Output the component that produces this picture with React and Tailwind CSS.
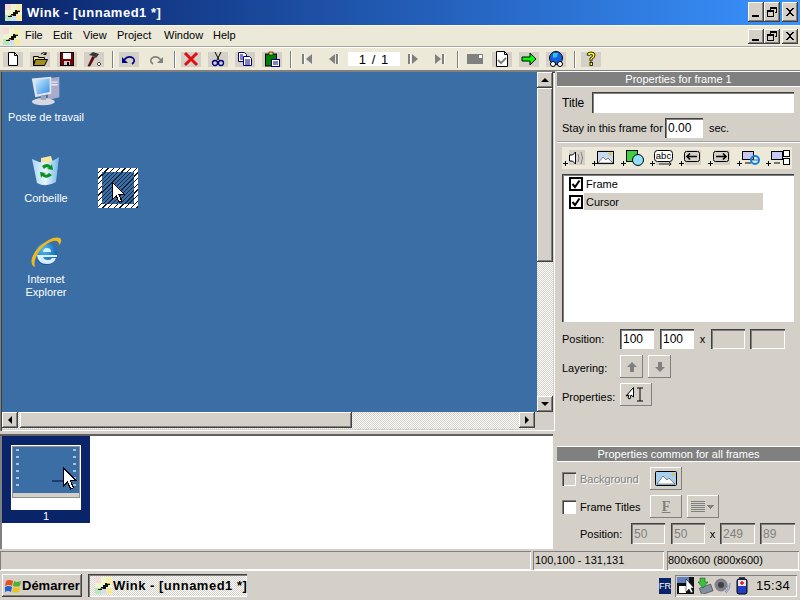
import { useId } from "react";

const raised = "bg-[#d4d0c8] shadow-[inset_-1px_-1px_0_#404040,inset_1px_1px_0_#ffffff,inset_-2px_-2px_0_#808080]";
const flatBtn = "bg-[#d4d0c8] shadow-[inset_-1px_-1px_0_#808080,inset_1px_1px_0_#ffffff]";
const sunken = "shadow-[inset_1px_1px_0_#808080,inset_-1px_-1px_0_#ffffff]";
const field = "bg-white shadow-[inset_1px_1px_0_#404040,inset_2px_2px_0_#808080,inset_-1px_-1px_0_#ffffff] flex items-center pl-[3px] text-[12px] leading-none";
const fieldOff = "bg-[#d4d0c8] text-[#808080] shadow-[inset_1px_1px_0_#404040,inset_2px_2px_0_#808080,inset_-1px_-1px_0_#ffffff] flex items-center pl-[3px] text-[12px] leading-none";
const dither = "bg-[repeating-conic-gradient(#ffffff_0_25%,#d4d0c8_0_50%)] bg-[length:2px_2px]";

function WinkLogo() {
  return (
    <svg width="17" height="17" viewBox="0 0 17 17" className="shrink-0" shapeRendering="crispEdges">
      <rect width="17" height="17" fill="#eef6d0" />
      <rect x="0" y="0" width="6" height="6" fill="#f8d8d8" />
      <rect x="11" y="0" width="6" height="6" fill="#f4f0b0" />
      <rect x="0" y="11" width="6" height="6" fill="#b8e8b8" />
      <rect x="6" y="11" width="5" height="6" fill="#c8e0f8" />
      <rect x="11" y="11" width="6" height="6" fill="#f8e8a0" />
      <path d="M3 12h3v-2h2v-2h2v-2h5v2h-2v2h-2v2h-4v1h-4z" fill="#101010" />
      <path d="M12 6h3v1h-3z" fill="#e8a020" />
      <path d="M5 11h3v1h-3z" fill="#c86020" />
    </svg>
  );
}

function WinBtn({ kind, className = "" }) {
  return (
    <div className={`${raised} w-[16px] flex items-center justify-center ${className}`}>
      <svg width="12" height="12" viewBox="0 0 12 12" shapeRendering="crispEdges">
        {kind === "min" && <rect x="2" y="9" width="7" height="2" fill="#000" />}
        {kind === "max" && (
          <>
            <path d="M4 1h7v6h-2v-1h1v-3h-5v1h-1z" fill="#000" />
            <path d="M1 4h7v7h-7z M2 6v4h5v-4z" fill="#000" fillRule="evenodd" />
          </>
        )}
        {kind === "close" && (
          <path d="M2 2h2v1h1v1h2v-1h1v-1h2v1h-1v1h-1v1h-1v2h1v1h1v1h1v1h-2v-1h-1v-1h-2v1h-1v1h-2v-1h1v-1h1v-1h1v-2h-1v-1h-1v-1h-1z" fill="#000" />
        )}
      </svg>
    </div>
  );
}

function ToolIcon({ children, bg = true, gap = true }) {
  return (
    <div className={`w-[20px] h-[15px] flex items-center justify-center shrink-0 ${bg ? "bg-[#d4d0c8]" : ""} ${gap ? "mr-[7px]" : ""}`}>
      <svg width="16" height="16" viewBox="0 0 16 16">{children}</svg>
    </div>
  );
}

function Sep({ left = true }) {
  return <div className={`w-[2px] h-[17px] bg-[#808080] border-r border-white mr-[5px] shrink-0 ${left ? "ml-[1px]" : "ml-0 mr-[6px]"}`} />;
}

function Toolbar() {
  return (
    <div className="h-[22px] bg-[#ece9d8] flex items-center pl-[3px] shrink-0">
      <ToolIcon><path d="M3.5 1.5h6l3 3v10h-9z" fill="#fff" stroke="#000" /><path d="M9.5 1.5v3h3" fill="none" stroke="#000" /></ToolIcon>
      <ToolIcon>
        <path d="M1.5 5.5h5v1h6v2h-9l-2 6z" fill="#f0e070" stroke="#000" />
        <path d="M3.5 8.5h12l-3 6h-11z" fill="#a09020" stroke="#000" />
        <path d="M9 3 Q12 0 14 3 M14 1v2.5h-2.5" fill="none" stroke="#000" />
      </ToolIcon>
      <ToolIcon>
        <rect x="1.5" y="1.5" width="13" height="13" fill="#800000" stroke="#000" />
        <rect x="4" y="2" width="8" height="6" fill="#fff" />
        <rect x="5" y="10" width="6" height="4" fill="#c8c8c8" />
        <rect x="8" y="11" width="2" height="3" fill="#000" />
      </ToolIcon>
      <ToolIcon>
        <path d="M2 15 L6.5 5.5 L8.5 6.5 L4 15 Z" fill="#800000" stroke="#200000" strokeWidth="0.6" />
        <path d="M3 4 L7 1 L13 3 L10 7 L7 5 Z" fill="#383838" />
        <path d="M13 11l2 2-2 2-2-2z" fill="#fff" stroke="#000" strokeWidth="0.7" />
      </ToolIcon>
      <Sep />
      <ToolIcon>
        <path d="M3 9 Q7 4 12 7 Q15 10 11 13" fill="none" stroke="#000080" strokeWidth="1.6" />
        <path d="M1 6v6h6z" fill="#000080" />
      </ToolIcon>
      <ToolIcon bg={false}>
        <path d="M13 9 Q9 4 4 7 Q1 10 5 13" fill="none" stroke="#808080" strokeWidth="1.6" />
        <path d="M15 6v6h-6z" fill="#808080" />
      </ToolIcon>
      <Sep />
      <ToolIcon>
        <path d="M2 2 L14 14 M14 2 L2 14" stroke="#e01010" strokeWidth="3" />
      </ToolIcon>
      <ToolIcon>
        <path d="M5 1 L9 9 M11 1 L7 9" stroke="#000" strokeWidth="1" />
        <circle cx="5" cy="12" r="2.5" fill="none" stroke="#000080" strokeWidth="1.3" />
        <circle cx="11" cy="12" r="2.5" fill="none" stroke="#000080" strokeWidth="1.3" />
      </ToolIcon>
      <ToolIcon>
        <path d="M1.5 1.5h6l2 2v7h-8z" fill="#fff" stroke="#000080" />
        <path d="M6.5 5.5h6l2 2v7h-8z" fill="#fff" stroke="#000080" />
        <path d="M8 9h5M8 11h5M8 13h5M3 4h3M3 6h3M3 8h3" stroke="#000080" />
      </ToolIcon>
      <ToolIcon>
        <rect x="1.5" y="3" width="11" height="12" fill="#008000" stroke="#000" />
        <rect x="5" y="1" width="4" height="3" fill="#e8d040" stroke="#000" strokeWidth="0.6" />
        <rect x="7.5" y="8.5" width="8" height="7" fill="#fff" stroke="#000080" />
        <path d="M9 11h5M9 13h5" stroke="#000080" />
      </ToolIcon>
      <Sep />
      <ToolIcon bg={false}>
        <rect x="3" y="3" width="2" height="10" fill="#808080" /><rect x="5" y="3" width="1" height="10" fill="#fff" />
        <path d="M13 3v10l-6-5z" fill="#808080" />
      </ToolIcon>
      <ToolIcon bg={false}>
        <path d="M9 3v10l-6-5z" fill="#808080" />
        <rect x="10" y="3" width="2" height="10" fill="#808080" /><rect x="12" y="3" width="1" height="10" fill="#fff" />
      </ToolIcon>
      <div className="w-[52px] h-[14px] bg-white flex items-center justify-center text-[13px] tracking-[1px] mr-[3px] -ml-[3px] shrink-0">1 / 1</div>
      <ToolIcon bg={false}>
        <rect x="3" y="3" width="2" height="10" fill="#808080" /><rect x="5" y="3" width="1" height="10" fill="#fff" />
        <path d="M7 3v10l6-5z" fill="#808080" />
      </ToolIcon>
      <ToolIcon bg={false}>
        <path d="M3 3v10l6-5z" fill="#808080" />
        <rect x="10" y="3" width="2" height="10" fill="#808080" /><rect x="12" y="3" width="1" height="10" fill="#fff" />
      </ToolIcon>
      <Sep left={false} />
      <ToolIcon bg={false}>
        <rect x="0" y="3" width="16" height="10" fill="#808080" />
        <rect x="12" y="4" width="3" height="3" fill="#fff" />
      </ToolIcon>
      <ToolIcon>
        <path d="M2.5 0.5h8l3 3v12h-11z" fill="#fff" stroke="#000" />
        <path d="M10.5 0.5v3h3" fill="none" stroke="#000" />
        <path d="M4 9l3 3 5-5" fill="none" stroke="#808080" strokeWidth="2" />
      </ToolIcon>
      <ToolIcon>
        <path d="M1 6h8v-4l6 6-6 6v-4h-8z" fill="#00ff00" stroke="#000" />
      </ToolIcon>
      <ToolIcon>
        <circle cx="8" cy="7" r="6.5" fill="#1060e0" stroke="#000" />
        <path d="M5 2 L10 2 L9 6 L5 7 Z" fill="#30c0e0" />
        <circle cx="5" cy="13" r="2.5" fill="#fff" stroke="#000" />
        <circle cx="12" cy="13" r="2.5" fill="#fff" stroke="#000" />
      </ToolIcon>
      <Sep />
      <ToolIcon gap={false}>
        <path d="M4 4 Q4 1 8 1 Q12 1 12 4 Q12 7 9 8 V10 H7 V7 Q10 6 9.5 4 Q8 2.5 6.5 4.5 Z" fill="#ffff00" stroke="#000" strokeWidth="0.8" />
        <rect x="7" y="11.5" width="2.5" height="3" fill="#ffff00" stroke="#000" strokeWidth="0.8" />
      </ToolIcon>
    </div>
  );
}

function ScrollBtn({ dir, className = "" }) {
  const pts = { up: "1,7 9,7 5,3", down: "1,3 9,3 5,7", left: "7,1 7,9 3,5", right: "3,1 3,9 7,5" };
  return (
    <div className={`${raised} h-[16px] flex items-center justify-center shrink-0 ${className}`}>
      <svg width="10" height="10" viewBox="0 0 10 10"><polygon points={pts[dir]} fill="#000" /></svg>
    </div>
  );
}

function Cursor({ className, w = 14, h = 22 }) {
  return (
    <svg width={w} height={h} viewBox="0 0 12 19" className={className} shapeRendering="crispEdges">
      <path d="M0.5 0.5 V16 L4 12.5 L6.5 18.5 L9 17.5 L6.5 11.5 H11.5 Z" fill="#fff" stroke="#000" />
    </svg>
  );
}

function DesktopIcons() {
  const id = useId();
  return (
    <>
      <div className="absolute left-[28px] top-[3px] w-[32px] h-[32px]">
        <svg width="32" height="32" viewBox="0 0 36 34">
          <defs>
            <linearGradient id={`${id}s`} x1="0" y1="0" x2="1" y2="1"><stop offset="0" stopColor="#d8f0ff" /><stop offset="1" stopColor="#2f8fe8" /></linearGradient>
          </defs>
          <path d="M20 3 L33 1 L33 24 L20 27 Z" fill="#a8acc8" />
          <path d="M24 7h7M24 10h7" stroke="#e8e8f0" strokeWidth="1.5" />
          <ellipse cx="15" cy="29" rx="13" ry="4" fill="#d8d8e0" />
          <path d="M2 3 L24 1 L24 20 L6 24 Z" fill="#e0e4ee" />
          <path d="M5 5 L22 3 L22 18 L8 21 Z" fill={`url(#${id}s)`} />
          <rect x="12" y="22" width="6" height="5" fill="#a0a4b8" />
        </svg>
      </div>
      <div className="absolute left-0 top-[39px] w-[88px] text-center text-white text-[11px] leading-[13px]">Poste de travail</div>

      <div className="absolute left-[29px] top-[83px] w-[30px] h-[32px]">
        <svg width="30" height="32" viewBox="0 0 30 32">
          <defs>
            <linearGradient id={`${id}b`} x1="0" y1="0" x2="1" y2="0"><stop offset="0" stopColor="#a8d8f8" /><stop offset="0.5" stopColor="#e8f4fc" /><stop offset="1" stopColor="#70b8e8" /></linearGradient>
          </defs>
          <path d="M10 3 L20 1 L22 8 L10 9 Z" fill="#f4e8a0" />
          <path d="M1 4 Q15 12 28 2 L25 27 Q15 33 6 28 Z" fill={`url(#${id}b)`} />
          <path d="M11 11 Q16 7 20 11 L21 9 L22 15 L16 14 L18 13 Q15 11 13 14 Z" fill="#089020" />
          <path d="M21 20 Q16 25 11 21 L10 23 L9 17 L15 18 L13 19 Q16 21 18 18 Z" fill="#089020" />
        </svg>
      </div>
      <div className="absolute left-0 top-[120px] w-[88px] text-center text-white text-[11px] leading-[13px]">Corbeille</div>

      <div className="absolute left-[28px] top-[165px] w-[32px] h-[32px]">
        <svg width="32" height="32" viewBox="0 0 32 32">
          <defs>
            <radialGradient id={`${id}e`} cx="0.4" cy="0.3" r="0.8"><stop offset="0" stopColor="#50c0f0" /><stop offset="1" stopColor="#0848a0" /></radialGradient>
          </defs>
          <circle cx="16" cy="17" r="11" fill={`url(#${id}e)`} />
          <path d="M13 15 Q13.5 11 17 11 Q21 11 21 15 Z" fill="#d8eefa" />
          <path d="M7 18h20v2h-14q1 3 5 3 3 0 4-2h4q-2 6-9 6-9 0-10-9z" fill="#d8eefa" />
          <path d="M3 29 Q-2 22 9 10 Q22 -2 30 1 Q33 4 29 8 Q29 3 23 4 Q10 8 5 23 Q4 27 5 30 Z" fill="#f0b820" />
        </svg>
      </div>
      <div className="absolute left-0 top-[201px] w-[88px] text-center text-white text-[11px] leading-[13px]">Internet<br />Explorer</div>

      {/* selected cursor frame */}
      <div className="absolute left-[96px] top-[96px] w-[40px] h-[40px] p-[4px] bg-[repeating-linear-gradient(135deg,#ffffff_0_3px,#101010_3px_4px)]">
        <div className="w-full h-full relative bg-[repeating-linear-gradient(135deg,#3a6ea5_0_2px,#16263c_2px_3px)]">
          <Cursor className="absolute left-[10px] top-[10px]" w={13} h={21} />
        </div>
      </div>
    </>
  );
}

function Canvas() {
  return (
    <div className="h-[360px] bg-[#d4d0c8] shadow-[inset_1px_1px_0_#808080,inset_2px_2px_0_#404040,inset_-1px_-1px_0_#ffffff] pt-[1px] pb-[2px] pl-[2px] flex flex-col shrink-0">
      <div className="flex flex-1 min-h-0">
        <div className="w-[535px] bg-[#3a6ea5] relative overflow-hidden shrink-0">
          <DesktopIcons />
        </div>
        <div className={`w-[16px] flex flex-col ${dither}`}>
          <ScrollBtn dir="up" />
          <div className={`${raised} h-[174px] shrink-0`} />
          <div className="flex-1" />
          <ScrollBtn dir="down" />
        </div>
      </div>
      <div className={`h-[17px] w-[533px] flex shrink-0 ${dither}`}>
        <ScrollBtn dir="left" className="w-[16px]" />
        <div className={`${raised} w-[332px] shrink-0 ml-[2px] h-[16px]`} />
        <div className="flex-1" />
        <ScrollBtn dir="right" className="w-[16px]" />
      </div>
    </div>
  );
}

function Thumbs() {
  return (
    <div className="flex-1 mt-[3px] mb-[1px] mr-[2px] border-t-2 border-[#606060] bg-white pl-[2px] shadow-[inset_2px_0_0_#808080]">
      <div className="w-[88px] h-[87px] bg-[#0a246a] pt-[9px] pl-[9px]">
        <div className="w-[70px] h-[65px] bg-white relative">
          <div className="w-[68px] h-[52px] ml-[1px] mt-[1px] inline-block align-top border border-[#909090] bg-[#3a6ea5] relative">
            <div className="absolute left-[3px] top-[2px] w-[3px] h-[40px] bg-[repeating-linear-gradient(180deg,#a8c0d8_0_2px,#3a6ea5_2px_7px)]" />
            <div className="absolute right-[3px] top-[2px] w-[3px] h-[40px] bg-[repeating-linear-gradient(180deg,#a8c0d8_0_2px,#3a6ea5_2px_7px)]" />
            <div className="absolute left-[39px] top-[33px] w-[13px] h-[2px] bg-[#1c3c70]" />
            <div className="absolute left-0 right-0 bottom-0 h-[4px] bg-[#d4d0c8]" />
          </div>
          <Cursor className="absolute left-[52px] top-[22px]" w={14} h={23} />
        </div>
        <div className="w-[70px] text-center text-white text-[11px] leading-[13px]">1</div>
      </div>
    </div>
  );
}

function PanelHeader({ children }) {
  return (
    <div className="h-[14px] bg-[#808080] text-white text-[11px] leading-[14px] text-center shadow-[0_-1px_0_#ffffff,0_1px_0_#ffffff]">
      {children}
    </div>
  );
}

function AddIcon({ children, bg = true }) {
  return (
    <div className="relative w-[22px] h-[16px] shrink-0 mr-[7px]">
      <div className={`absolute right-0 top-0 w-[16px] h-[15px] ${bg ? "bg-[#d4d0c8]" : ""}`} />
      <svg width="22" height="16" viewBox="0 0 22 16" className="absolute left-0 top-0" overflow="visible">
        <path d="M0 13.5h5M2.5 11v5" stroke="#000" />
        {children}
      </svg>
    </div>
  );
}

function IconStrip() {
  return (
    <div className="h-[22px] w-[230px] ml-[5px] mt-[4px] bg-[#ece9d8] flex items-center pl-[1px]">
      <AddIcon>
        <path d="M6.5 5h3l3-3v12l-3-3h-3z" fill="#fff" stroke="#000" />
        <path d="M15 4q2 4 0 8M18 2q3 6 0 12" fill="none" stroke="#808080" />
      </AddIcon>
      <AddIcon>
        <rect x="5.5" y="1.5" width="16" height="12" fill="#c8d8f0" stroke="#000" />
        <path d="M6 13l5-6 3 3 2-2 5 5z" fill="#fff" stroke="#404040" strokeWidth="0.6" />
        <circle cx="18" cy="4" r="1.4" fill="#f0c020" />
      </AddIcon>
      <AddIcon bg={false}>
        <rect x="5.5" y="0.5" width="11" height="11" fill="#40d040" stroke="#000" />
        <circle cx="17" cy="10" r="5.5" fill="#90e0f8" stroke="#000" />
      </AddIcon>
      <AddIcon>
        <rect x="4.5" y="0.5" width="18" height="11" rx="3" fill="#fff" stroke="#000" />
        <text x="13.5" y="9" textAnchor="middle" fontSize="9.5" fontFamily="Liberation Sans, sans-serif">abc</text>
        <path d="M9 14h12M19 12l2 2-2 2" fill="none" stroke="#000" strokeWidth="0.8" />
      </AddIcon>
      <AddIcon>
        <rect x="5.5" y="1.5" width="15" height="10" rx="2" fill="#d4d0c8" stroke="#000" />
        <path d="M8 6.5h10M11 3.5l-3 3 3 3" fill="none" stroke="#000" strokeWidth="1.6" />
      </AddIcon>
      <AddIcon>
        <rect x="5.5" y="1.5" width="15" height="10" rx="2" fill="#d4d0c8" stroke="#000" />
        <path d="M8 6.5h10M15 3.5l3 3-3 3" fill="none" stroke="#000" strokeWidth="1.6" />
      </AddIcon>
      <AddIcon bg={false}>
        <rect x="5.5" y="1.5" width="11" height="8" fill="#c8c8f0" stroke="#000" />
        <path d="M8 13h6" stroke="#000" />
        <circle cx="18" cy="10" r="4" fill="none" stroke="#1080e0" strokeWidth="2" />
        <path d="M14 10h8" stroke="#1080e0" />
      </AddIcon>
      <AddIcon bg={false}>
        <rect x="5.5" y="1.5" width="11" height="8" fill="#c8c8f0" stroke="#000" />
        <path d="M8 13h6" stroke="#000" />
        <rect x="17.5" y="0.5" width="6" height="6" fill="#fff" stroke="#000" />
        <rect x="17.5" y="8.5" width="6" height="6" fill="#fff" stroke="#000" />
      </AddIcon>
    </div>
  );
}

function Check({ checked, off, className = "" }) {
  return (
    <div className={`w-[14px] h-[14px] shrink-0 ${off ? "bg-[#d4d0c8]" : "bg-white"} ${checked ? "border-2 border-black" : "shadow-[inset_1px_1px_0_#808080,inset_2px_2px_0_#404040,inset_-1px_-1px_0_#ffffff]"} ${className}`}>
      {checked && (
        <svg width="10" height="10" viewBox="0 0 10 10"><path d="M1.5 5l2.5 3 4.5-6.5" fill="none" stroke="#000" strokeWidth="2" /></svg>
      )}
    </div>
  );
}

function PropsPanel() {
  return (
    <div className="w-[245px] shrink-0 flex flex-col pl-[2px]">
      <div className="mt-[1px]"><PanelHeader>Properties for frame 1</PanelHeader></div>

      <div className="flex items-center h-[21px] mt-[6px] pl-[5px]">
        <span className="w-[30px] text-[12px]">Title</span>
        <div className={`${field} w-[202px] h-[21px]`} />
      </div>
      <div className="flex items-center h-[20px] mt-[5px] pl-[5px]">
        <span className="w-[103px] text-[11px]">Stay in this frame for</span>
        <div className={`${field} w-[38px] h-[20px]`}>0.00</div>
        <span className="ml-[6px]">sec.</span>
      </div>

      <div className="h-[2px] mt-[3px] bg-white border-t border-[#a0a0a0]" />
      <IconStrip />

      <div className={`${field} !block !pl-0 w-[232px] h-[148px] ml-[5px] mt-[5px]`}>
        <div className="flex items-start h-[19px] pl-[7px] pt-[3px]">
          <Check checked />
          <span className="ml-[3px] text-[11px] leading-[15px]">Frame</span>
        </div>
        <div className="flex items-center h-[17px] pl-[7px]">
          <Check checked />
          <span className="ml-[1px] pl-[2px] w-[179px] h-[17px] leading-[18px] text-[11px] bg-[#d4d0c8]">Cursor</span>
        </div>
      </div>

      <div className="flex items-center h-[20px] mt-[7px] pl-[5px]">
        <span className="w-[58px] mt-[1px]">Position:</span>
        <div className={`${field} w-[34px] h-[20px]`}>100</div>
        <div className={`${field} w-[34px] h-[20px] ml-[6px]`}>100</div>
        <span className="w-[17px] text-center mt-[1px]">x</span>
        <div className={`${fieldOff} w-[34px] h-[20px]`} />
        <div className={`${fieldOff} w-[35px] h-[20px] ml-[5px]`} />
      </div>

      <div className="flex items-center h-[23px] mt-[6px] pl-[5px]">
        <span className="w-[58px] mt-[3px]">Layering:</span>
        <div className={`${flatBtn} w-[23px] h-[23px] flex items-center justify-center`}>
          <svg width="12" height="12" viewBox="0 0 12 12"><path d="M6 1l5 5H8v5H4V6H1z" fill="#808080" /></svg>
        </div>
        <div className={`${flatBtn} w-[23px] h-[23px] ml-[5px] flex items-center justify-center`}>
          <svg width="12" height="12" viewBox="0 0 12 12"><path d="M6 11l5-5H8V1H4v5H1z" fill="#808080" /></svg>
        </div>
      </div>

      <div className="flex items-center h-[23px] mt-[5px] pl-[5px]">
        <span className="w-[58px] mt-[5px]">Properties:</span>
        <div className={`${flatBtn} w-[32px] h-[23px] flex items-center justify-center`}>
          <svg width="24" height="17" viewBox="0 0 24 17">
            <path d="M9.5 1.5V11L7 9l-1 4-2-1 1-3-3 1z" fill="#fff" stroke="#000" />
            <path d="M13 2h6M13 15h6M16 2v13" fill="none" stroke="#000" />
          </svg>
        </div>
      </div>

      <div className="mt-[41px]"><PanelHeader>Properties common for all frames</PanelHeader></div>

      <div className="flex items-center h-[23px] mt-[6px] pl-[5px]">
        <Check off />
        <span className="ml-[4px] w-[70px] mt-[1px] text-[#808080] [text-shadow:1px_1px_0_#ffffff]">Background</span>
        <div className={`${flatBtn} w-[32px] h-[23px] flex items-center justify-center`}>
          <svg width="22" height="16" viewBox="0 0 22 16">
            <rect x="0.5" y="0.5" width="21" height="14" rx="1" fill="#a8d0f0" stroke="#000" />
            <path d="M2 13l6-8 4 4 2-2 6 6z" fill="#fff" stroke="#404040" strokeWidth="0.6" />
            <circle cx="18" cy="3.5" r="1.4" fill="#f0c020" />
          </svg>
        </div>
      </div>

      <div className="flex items-center h-[23px] mt-[5px] pl-[5px]">
        <Check />
        <span className="ml-[4px] w-[70px] mt-[1px]">Frame Titles</span>
        <div className={`${flatBtn} w-[32px] h-[23px] flex items-center justify-center`}>
          <span className="text-[#808080] font-bold text-[14px] underline [font-family:'Liberation_Serif',serif]">F</span>
        </div>
        <div className={`${flatBtn} w-[32px] h-[23px] ml-[5px] flex items-center pl-[4px]`}>
          <svg width="24" height="13" viewBox="0 0 24 13" shapeRendering="crispEdges">
            <path d="M0 1h14M0 3h14M0 5h14M0 7h14M0 9h14M0 11h14" stroke="#808080" />
            <path d="M16 5h7l-3.5 4z" fill="#808080" />
          </svg>
        </div>
      </div>

      <div className="flex items-center h-[21px] mt-[5px] pl-[23px]">
        <span className="w-[51px] mt-[1px]">Position:</span>
        <div className={`${fieldOff} w-[34px] h-[21px]`}>50</div>
        <div className={`${fieldOff} w-[34px] h-[21px] ml-[6px]`}>50</div>
        <span className="w-[15px] text-center mt-[1px]">x</span>
        <div className={`${fieldOff} w-[35px] h-[21px]`}>249</div>
        <div className={`${fieldOff} w-[35px] h-[21px] ml-[5px]`}>89</div>
      </div>
    </div>
  );
}

function StatusBar() {
  return (
    <div className="h-[20px] bg-[#d4d0c8] flex pt-[1px] text-[11px] shrink-0">
      <div className={`${sunken} w-[531px]`} />
      <div className={`${sunken} w-[131px] ml-[2px] pl-[2px] leading-[19px]`}>100,100 - 131,131</div>
      <div className={`${sunken} w-[132px] ml-[3px] pl-[1px] leading-[19px]`}>800x600 (800x600)</div>
    </div>
  );
}

function Taskbar() {
  return (
    <div className="flex-1 bg-[#d4d0c8] border-t border-white flex items-center pl-[2px]">
      <div className={`${raised} w-[80px] h-[23px] flex items-center pl-[3px] shrink-0`}>
        <svg width="17" height="16" viewBox="0 0 17 16" className="shrink-0">
          <path d="M1 3 Q4 1 8 3 L7 8 Q4 6 0 8 Z" fill="#e85020" />
          <path d="M9 3 Q12 5 16 3 L15 8 Q12 9 8 8 Z" fill="#50b030" />
          <path d="M0 9 Q4 7 7 9 L6 14 Q3 12 0 14 Z" fill="#2060d0" />
          <path d="M8 9 Q12 10 15 9 L14 14 Q11 15 7 14 Z" fill="#f0c020" />
        </svg>
        <span className="font-bold text-[13px] leading-none">Démarrer</span>
      </div>
      <div className={`w-[159px] h-[23px] ml-[6px] flex items-center pl-[7px] shrink-0 ${dither} shadow-[inset_1px_1px_0_#404040,inset_2px_2px_0_#808080,inset_-1px_-1px_0_#ffffff]`}>
        <WinkLogo />
        <span className="ml-[1px] font-bold text-[13px] tracking-[0.5px]">Wink - [unnamed1 *]</span>
      </div>
      <div className="ml-[412px] w-[12px] h-[16px] bg-[#0a246a] text-white text-[9px] leading-[16px] text-center shrink-0">FR</div>
      <div className={`${sunken} ml-[4px] w-[122px] h-[22px] flex items-center pl-[2px] shrink-0`}>
        <svg width="17" height="17" viewBox="0 0 17 17" className="shrink-0">
          <rect width="17" height="17" fill="#101010" />
          <rect x="0" y="0" width="12" height="6" fill="#6080c0" />
          <rect x="2" y="9" width="7" height="7" fill="#fff" />
          <path d="M9 2v13l3-3 2 4 2-1-2-4h3z" fill="#fff" stroke="#000" strokeWidth="0.5" />
        </svg>
        <svg width="17" height="17" viewBox="0 0 17 17" className="ml-[3px] shrink-0">
          <rect x="3" y="9" width="12" height="7" fill="#8090a0" stroke="#404040" strokeWidth="0.6" transform="rotate(-20 9 12)" />
          <path d="M3 1h5v4h3l-5 6-5-6h2z" fill="#40c040" stroke="#106010" strokeWidth="0.6" />
        </svg>
        <svg width="17" height="17" viewBox="0 0 17 17" className="shrink-0">
          <circle cx="7" cy="8" r="6.5" fill="#808088" />
          <circle cx="7" cy="8" r="3" fill="#404048" />
          <path d="M14 8q1 4-3 7M16 6q1 6-4 10" fill="none" stroke="#8090c8" />
        </svg>
        <svg width="14" height="18" viewBox="0 0 14 18" className="ml-[4px] shrink-0">
          <rect x="4" y="0" width="6" height="2" fill="#404040" />
          <rect x="2" y="2" width="10" height="15" rx="2" fill="#2040c0" stroke="#000" />
          <rect x="3" y="3" width="8" height="6" fill="#e8e8f0" />
          <path d="M7 4v4M5 6h4" stroke="#e01010" strokeWidth="1.4" />
        </svg>
        <span className="ml-[7px] text-[13px] tracking-[0.3px]">15:34</span>
      </div>
    </div>
  );
}

export default function App() {
  return (
    <div className="w-[800px] h-[600px] overflow-hidden flex flex-col bg-[#d4d0c8] text-black text-[11px] leading-none whitespace-nowrap [font-family:'Liberation_Sans',sans-serif]">
      <div className="h-[25px] shrink-0 bg-[linear-gradient(90deg,#0a246a,#3a93ff)] flex items-center pl-[5px]">
        <WinkLogo />
        <span className="ml-[5px] text-white font-bold text-[13px] tracking-[0.5px]">Wink - [unnamed1 *]</span>
        <div className="ml-auto flex h-[20px] mr-[2px] mb-[1px]">
          <WinBtn kind="min" />
          <WinBtn kind="max" />
          <WinBtn kind="close" className="ml-[2px]" />
        </div>
      </div>

      <div className="h-[21px] shrink-0 bg-[#ece9d8] flex items-center pl-[3px] border-t border-[#f8f8f0]">
        <WinkLogo />
        <div className="flex text-[11px] ml-[5px] -mt-[2px]">
          <span className="w-[28px]">File</span>
          <span className="w-[30px]">Edit</span>
          <span className="w-[34px]">View</span>
          <span className="w-[47px]">Project</span>
          <span className="w-[49px]">Window</span>
          <span>Help</span>
        </div>
        <div className="ml-auto flex h-[15px] mr-[2px]">
          <WinBtn kind="min" />
          <WinBtn kind="max" />
          <WinBtn kind="close" className="ml-[2px]" />
        </div>
      </div>
      <div className="h-[1px] bg-[#a8a498] shrink-0" />
      <div className="h-[1px] bg-white shrink-0" />
      <Toolbar />
      <div className="h-[1px] bg-[#808080] shrink-0" />

      <div className="h-[479px] flex shrink-0">
        <div className="w-[555px] flex flex-col shrink-0">
          <Canvas />
          <Thumbs />
        </div>
        <PropsPanel />
      </div>

      <StatusBar />
      <Taskbar />
    </div>
  );
}
